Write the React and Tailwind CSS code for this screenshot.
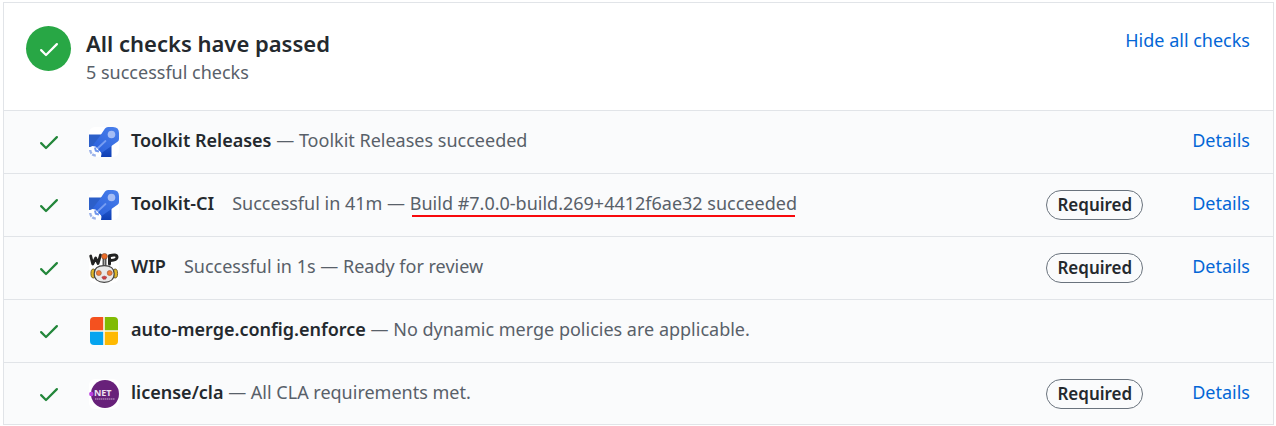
import React from 'react';

function Check({ className }) {
  return (
    <svg viewBox="0 0 16 16" className={className} fill="currentColor" aria-hidden="true">
      <path d="M13.78 4.22a.75.75 0 010 1.06l-7.25 7.25a.75.75 0 01-1.06 0L2.22 9.28a.75.75 0 011.06-1.06L6 10.94l6.72-6.72a.75.75 0 011.06 0z" />
    </svg>
  );
}

function Pipelines() {
  return (
    <svg viewBox="0 0 30 30" className="size-full" aria-hidden="true">
      <defs>
        <linearGradient id="rocket" x1="1" y1="0" x2="0.2" y2="1">
          <stop offset="0" stopColor="#4a80ec" />
          <stop offset="1" stopColor="#2c62dc" />
        </linearGradient>
        <linearGradient id="fin" x1="0" y1="0" x2="0" y2="1">
          <stop offset="0" stopColor="#2a60d4" />
          <stop offset="1" stopColor="#0f3fb4" />
        </linearGradient>
      </defs>
      <rect width="30" height="30" rx="6" fill="#fff" />
      <path d="M0 7.500h14L8 20H0z" fill="#2c5fc9" />
      <path d="M22.500 15v15H12v-8z" fill="url(#fin)" />
      <path d="M11 9L16 1.500Q17 0 19 0h5q6 0 6 6v6q0 1.500-1.200 2.500L12.500 26 4 18z" fill="url(#rocket)" />
      <circle cx="22.500" cy="7.500" r="3.800" fill="#a5bdf5" />
      <path d="M8.500 21.500l8-7.500" stroke="#779df2" strokeWidth="1.800" strokeLinecap="round" />
      <path d="M0 20.500l3.500-1.500 3 .5 4.500 5 1.500 2-.5 3.500H6q-6 0-6-6z" fill="#fff" />
      <path d="M6 20.500l.8 3.200 3.200.8" fill="none" stroke="#6f95ec" strokeWidth="2" />
      <path d="M1.200 23q.5 5.300 6 5.600" fill="none" stroke="#9bb2e9" strokeWidth="2.400" strokeDasharray="3.800 1" />
    </svg>
  );
}

function WipRobot() {
  return (
    <svg viewBox="0 0 30 30" className="size-full" aria-hidden="true">
      <rect width="30" height="30" rx="6" fill="#fff" />
      <path d="M1.700 3l2 8 3-6 2.300 5.500L11.500 2" fill="none" stroke="#222" strokeWidth="2.800" strokeLinejoin="round" strokeLinecap="round" />
      <path d="M20.500 11V2.700q7.200-2 7.500 1.200.2 3.500-6.500 3.600" fill="none" stroke="#222" strokeWidth="3" strokeLinejoin="round" strokeLinecap="round" />
      <path d="M15.500 5v9" stroke="#333" strokeWidth="3.800" />
      <path d="M15.500 5v9" stroke="#a9a9a9" strokeWidth="1.600" />
      <circle cx="15.500" cy="3.300" r="2.900" fill="#ed6c27" stroke="#6b4632" strokeWidth=".6" />
      <ellipse cx="4.300" cy="20.500" rx="2.400" ry="4.500" fill="#dfb526" stroke="#554823" strokeWidth=".8" />
      <ellipse cx="26.200" cy="20.500" rx="2.400" ry="4.500" fill="#dfb526" stroke="#554823" strokeWidth=".8" />
      <path d="M15.200 12.700c6.500 0 10 3 10 8 0 5.500-4 8.600-10 8.600s-10-3.100-10-8.600c0-5 3.500-8 10-8z" fill="#e9e9e9" stroke="#444" strokeWidth="1.200" />
      <circle cx="9.800" cy="20" r="2.500" fill="#f07a35" stroke="#a5603a" strokeWidth=".7" />
      <circle cx="20.700" cy="20" r="2.500" fill="#f07a35" stroke="#a5603a" strokeWidth=".7" />
      <path d="M12.800 24l2.500-1 2.500 1-1.200 2.200h-2.600z" fill="#d33d42" stroke="#874146" strokeWidth=".5" />
    </svg>
  );
}

function Windows() {
  return (
    <svg viewBox="0 0 30 30" className="size-full" aria-hidden="true">
      <rect x="1" y="1" width="28" height="28" rx="4" fill="#fdf8ea" />
      <path d="M5 1h9.200v13.200H1V5q0-4 4-4z" fill="#f4511f" />
      <path d="M15.800 1H25q4 0 4 4v9.200H15.800z" fill="#80bb03" />
      <path d="M1 15.800h13.200V29H5q-4 0-4-4z" fill="#05a4ef" />
      <path d="M15.800 15.800H29V25q0 4-4 4h-9.200z" fill="#feb902" />
    </svg>
  );
}

function DotNet() {
  return (
    <svg viewBox="0 0 30 30" className="size-full" aria-hidden="true">
      <rect width="30" height="30" rx="6" fill="#fff" />
      <circle cx="16" cy="15" r="14" fill="#68217a" />
      <circle cx="2.300" cy="15" r="2.200" fill="#bb3fe0" />
      <text x="5" y="17" fontSize="9" fontWeight="700" fontFamily="Open Sans, sans-serif" fill="#eee1f2">NET</text>
      <path d="M6 20h20" stroke="#a77bb3" strokeWidth="1.500" strokeDasharray="1.500 .5" />
    </svg>
  );
}

const checks = [
  { name: 'Toolkit Releases', Icon: Pipelines, message: 'Toolkit Releases succeeded', details: true },
  {
    name: 'Toolkit-CI',
    Icon: Pipelines,
    timing: 'Successful in 41m',
    message: 'Build #7.0.0-build.269+4412f6ae32 succeeded',
    marked: true,
    required: true,
    details: true,
  },
  { name: 'WIP', Icon: WipRobot, timing: 'Successful in 1s', message: 'Ready for review', required: true, details: true },
  { name: 'auto-merge.config.enforce', Icon: Windows, message: 'No dynamic merge policies are applicable.' },
  { name: 'license/cla', Icon: DotNet, message: 'All CLA requirements met.', required: true, details: true },
];

function CheckRow({ name, Icon, timing, message, marked, required, details }) {
  return (
    <li className="flex items-start border-t border-[#e1e4e8] bg-[#fafbfc] pt-4 pr-[23px] pb-4 pl-[33px] last:pb-[15px]">
      <Check className="mt-[3px] size-6 shrink-0 text-[#22863a]" />
      <span className="ml-7 size-[30px] shrink-0">
        <Icon />
      </span>
      <p className="ml-3 min-w-0 flex-1 leading-[26px]">
        <strong className="font-semibold text-[#24292e]">{name}</strong>
        {timing && <span className="ml-[18px]">{timing}</span>}
        {' — '}
        <span className="relative">
          {message}
          {marked && <span className="absolute inset-x-0.5 -bottom-0.5 h-0.5 bg-[#f8090c]" />}
        </span>
      </p>
      {required && (
        <span className="mr-[49px] rounded-full border border-[#6a737d] px-2.5 text-[17px] leading-7 font-semibold text-[#24292e]">
          Required
        </span>
      )}
      {details && (
        <a href="#details" aria-label={`Details for ${name}`} className="leading-[26px] text-[#0366d6]">
          Details
        </a>
      )}
    </li>
  );
}

export default function App() {
  return (
    <main className="bg-white pt-0.5 pr-0.5 pl-[3px] font-['Noto_Sans','Open_Sans',sans-serif] text-[18px] text-[#586069]">
      <section className="border border-[#e1e4e8]">
        <header className="flex items-start pt-[23px] pr-[23px] pb-[23px] pl-[22px]">
          <span className="flex size-[45px] shrink-0 items-center justify-center rounded-full bg-[#28a745] text-white">
            <Check className="size-6" />
          </span>
          <div className="ml-[15px] flex-1 pt-0.5">
            <h1 className="text-[22px] leading-[30px] font-semibold text-[#24292e]">All checks have passed</h1>
            <p className="leading-[29px]">5 successful checks</p>
          </div>
          <button type="button" className="leading-7 text-[#0366d6]">Hide all checks</button>
        </header>
        <ul>
          {checks.map((check) => (
            <CheckRow key={check.name} {...check} />
          ))}
        </ul>
      </section>
    </main>
  );
}
